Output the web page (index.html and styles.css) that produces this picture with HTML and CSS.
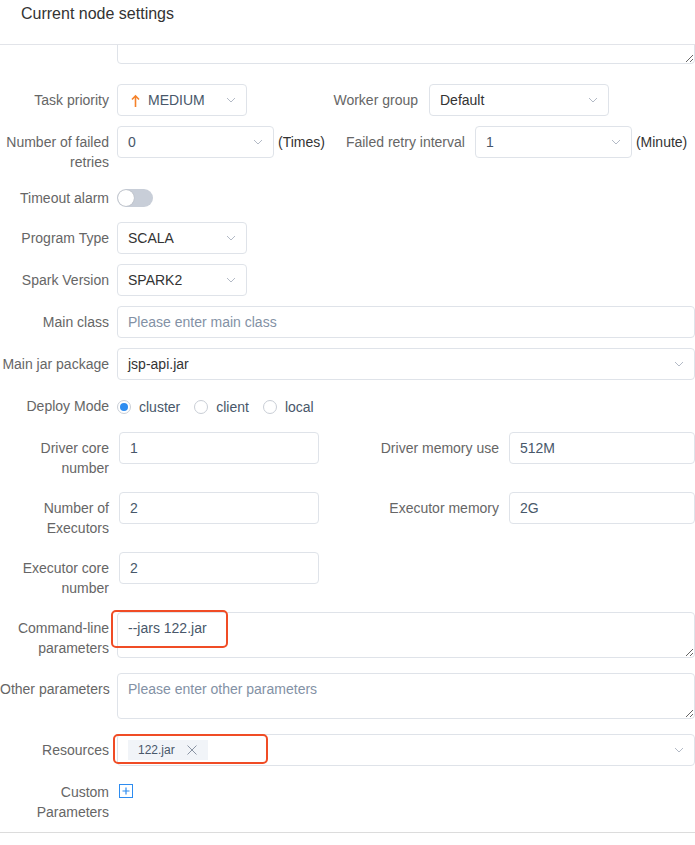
FILE: index.html
```html
<!DOCTYPE html>
<html lang="en">
<head>
    <meta charset="UTF-8">
    <meta name="viewport" content="width=device-width, initial-scale=1.0">
    <title>Current node settings</title>
    <link rel="stylesheet" href="styles.css">
</head>
<body>
    <div class="panel">
        <div class="panel-head">Current node settings</div>
        <div class="panel-body">
            <div class="form">
                <!-- description field, scrolled up under the header -->
                <div class="row row-desc">
                    <div class="label"></div>
                    <div class="field"><textarea class="textarea"></textarea></div>
                </div>

                <div class="row">
                    <div class="label">Task priority</div>
                    <div class="field">
                        <div class="select w-130">
                            <svg class="priority-icon" width="9" height="13" viewBox="0 0 9 13">
                                <path d="M4.5 13V2M1 5.5L4.5 1.8 8 5.5" fill="none" stroke="#f5822a" stroke-width="1.6"/>
                            </svg>
                            <span class="select-value muted">MEDIUM</span>
                            <svg class="arrow" width="10" height="6" viewBox="0 0 10 6"><polyline points="1,1 5,5 9,1" fill="none" stroke="#b3bac6"/></svg>
                        </div>
                        <div class="sub-label w-171">Worker group</div>
                        <div class="select w-180">
                            <span class="select-value">Default</span>
                            <svg class="arrow" width="10" height="6" viewBox="0 0 10 6"><polyline points="1,1 5,5 9,1" fill="none" stroke="#b3bac6"/></svg>
                        </div>
                    </div>
                </div>

                <div class="row">
                    <div class="label">Number of failed retries</div>
                    <div class="field">
                        <div class="select w-157">
                            <span class="select-value muted">0</span>
                            <svg class="arrow" width="10" height="6" viewBox="0 0 10 6"><polyline points="1,1 5,5 9,1" fill="none" stroke="#b3bac6"/></svg>
                        </div>
                        <span class="unit">(Times)</span>
                        <div class="sub-label w-140">Failed retry interval</div>
                        <div class="select w-157">
                            <span class="select-value muted">1</span>
                            <svg class="arrow" width="10" height="6" viewBox="0 0 10 6"><polyline points="1,1 5,5 9,1" fill="none" stroke="#b3bac6"/></svg>
                        </div>
                        <span class="unit">(Minute)</span>
                    </div>
                </div>

                <div class="row row-switch">
                    <div class="label">Timeout alarm</div>
                    <div class="field">
                        <span class="switch"><span class="switch-knob"></span></span>
                    </div>
                </div>

                <div class="row">
                    <div class="label">Program Type</div>
                    <div class="field">
                        <div class="select w-130">
                            <span class="select-value">SCALA</span>
                            <svg class="arrow" width="10" height="6" viewBox="0 0 10 6"><polyline points="1,1 5,5 9,1" fill="none" stroke="#b3bac6"/></svg>
                        </div>
                    </div>
                </div>

                <div class="row">
                    <div class="label">Spark Version</div>
                    <div class="field">
                        <div class="select w-130">
                            <span class="select-value">SPARK2</span>
                            <svg class="arrow" width="10" height="6" viewBox="0 0 10 6"><polyline points="1,1 5,5 9,1" fill="none" stroke="#b3bac6"/></svg>
                        </div>
                    </div>
                </div>

                <div class="row">
                    <div class="label">Main class</div>
                    <div class="field">
                        <input class="input" type="text" placeholder="Please enter main class">
                    </div>
                </div>

                <div class="row">
                    <div class="label">Main jar package</div>
                    <div class="field">
                        <div class="select grow">
                            <span class="select-value">jsp-api.jar</span>
                            <svg class="arrow" width="10" height="6" viewBox="0 0 10 6"><polyline points="1,1 5,5 9,1" fill="none" stroke="#b3bac6"/></svg>
                        </div>
                    </div>
                </div>

                <div class="row row-radio">
                    <div class="label">Deploy Mode</div>
                    <div class="field radios">
                        <label class="radio"><span class="radio-dot checked"></span>cluster</label>
                        <label class="radio"><span class="radio-dot"></span>client</label>
                        <label class="radio"><span class="radio-dot"></span>local</label>
                    </div>
                </div>

                <div class="row row-pair">
                    <div class="label">Driver core number</div>
                    <input class="input w-200" type="text" value="1">
                    <div class="sub-label w-180">Driver memory use</div>
                    <input class="input grow" type="text" value="512M">
                </div>

                <div class="row row-pair">
                    <div class="label">Number of Executors</div>
                    <input class="input w-200" type="text" value="2">
                    <div class="sub-label w-180">Executor memory</div>
                    <input class="input grow" type="text" value="2G">
                </div>

                <div class="row row-pair">
                    <div class="label">Executor core number</div>
                    <input class="input w-200" type="text" value="2">
                </div>

                <div class="row row-text">
                    <div class="label">Command-line parameters</div>
                    <div class="field"><textarea class="textarea">--jars 122.jar</textarea></div>
                </div>

                <div class="row row-text">
                    <div class="label nowrap">Other parameters</div>
                    <div class="field"><textarea class="textarea" placeholder="Please enter other parameters"></textarea></div>
                </div>

                <div class="row">
                    <div class="label">Resources</div>
                    <div class="field">
                        <div class="select grow">
                            <span class="select-value">
                                <span class="tag">122.jar
                                    <svg class="tag-close" width="10" height="10" viewBox="0 0 10 10"><path d="M0.5 0.5L9.5 9.5M9.5 0.5L0.5 9.5" stroke="#8a94a3"/></svg>
                                </span>
                            </span>
                            <svg class="arrow" width="10" height="6" viewBox="0 0 10 6"><polyline points="1,1 5,5 9,1" fill="none" stroke="#b3bac6"/></svg>
                        </div>
                    </div>
                </div>

                <div class="row row-last">
                    <div class="label">Custom Parameters</div>
                    <div class="field">
                        <svg class="add-icon" width="14" height="14" viewBox="0 0 14 14">
                            <rect x="0.5" y="0.5" width="13" height="13" fill="none" stroke="#2d8cf0"/>
                            <path d="M7 3.5V10.5M3.5 7H10.5" stroke="#2d8cf0" stroke-width="1.2"/>
                        </svg>
                    </div>
                </div>
            </div>
        </div>

        <!-- review marks -->
        <div class="mark mark-cmd"></div>
        <div class="mark mark-res"></div>
    </div>
</body>
</html>
```

FILE: styles.css
```css
* {
    box-sizing: border-box;
}
body {
    margin: 0;
    font-family: "Liberation Sans", Arial, sans-serif;
    font-size: 14px;
    color: #333;
    background: #fff;
}
.panel {
    position: relative;
    width: 695px;
    height: 845px;
    overflow: hidden;
}
.panel-head {
    height: 45px;
    padding-left: 21px;
    font-size: 16px;
    line-height: 27px;
    color: #333;
    border-bottom: 1px solid #e2e4e9;
}
.panel-body {
    height: 800px;
    overflow: hidden;
}
.form {
    margin-top: -27px;
    border-bottom: 1px solid #dcdcdc;
}
.row {
    display: flex;
    align-items: flex-start;
    margin-bottom: 10px;
}
.row-desc {
    margin-bottom: 20px;
}
.row-switch {
    min-height: 30px;
}
.row-radio {
    min-height: 32px;
}
.row-pair {
    min-height: 50px;
}
.row-text {
    margin-bottom: 15px;
}
.label {
    flex: none;
    width: 109px;
    margin-right: 8px;
    padding-top: 6px;
    line-height: 20px;
    text-align: right;
    color: #666;
}
.label.nowrap {
    white-space: nowrap;
}
.row-pair .label {
    margin-right: 10px;
}
.field {
    flex: 1;
    min-width: 0;
    display: flex;
    align-items: center;
}
.sub-label {
    flex: none;
    margin-right: 10px;
    line-height: 32px;
    text-align: right;
    color: #666;
}
.sub-label.w-171 {
    width: 171px;
    margin-right: 11px;
}
.unit {
    flex: none;
    margin-left: 4px;
    color: #333;
}
.w-130 { width: 130px; }
.w-140 { width: 140px; }
.w-157 { width: 157px; }
.w-180 { width: 180px; }
.w-200 { width: 200px; }
.grow { flex: 1; min-width: 0; }

.select {
    flex: none;
    display: flex;
    align-items: center;
    height: 32px;
    padding: 0 10px;
    border: 1px solid #dfe3e9;
    border-radius: 4px;
    background: #fff;
}
.select.grow {
    flex: 1;
}
.select-value {
    flex: 1;
    display: flex;
    align-items: center;
    white-space: nowrap;
    color: #333;
}
.select-value.muted {
    color: #48576a;
}
.arrow {
    flex: none;
}
.priority-icon {
    flex: none;
    margin: 0 8px 0 3px;
}

.input {
    display: block;
    width: 100%;
    height: 32px;
    padding: 0 10px;
    border: 1px solid #dfe3e9;
    border-radius: 4px;
    font-family: inherit;
    font-size: 14px;
    color: #48576a;
    outline: none;
}
.input.w-200 {
    width: 200px;
    flex: none;
}
.input::placeholder,
.textarea::placeholder {
    color: #8391a5;
}
.textarea {
    display: block;
    width: 100%;
    height: 46px;
    padding: 5px 10px;
    border: 1px solid #dfe3e9;
    border-radius: 4px;
    font-family: inherit;
    font-size: 14px;
    line-height: 20px;
    color: #48576a;
    outline: none;
}

.switch {
    position: relative;
    display: block;
    width: 36px;
    height: 18px;
    margin-top: 7px;
    border-radius: 9px;
    background: #c8ced8;
}
.switch-knob {
    position: absolute;
    top: 1px;
    left: 1px;
    width: 16px;
    height: 16px;
    border-radius: 50%;
    background: #fff;
    box-shadow: 0 0 1px rgba(0, 0, 0, 0.3);
}
.row-switch .field {
    align-items: flex-start;
}

.radios {
    padding-top: 7px;
    line-height: 20px;
}
.radio {
    display: flex;
    align-items: center;
    margin-right: 14px;
    color: #48576a;
}
.radio-dot {
    position: relative;
    width: 14px;
    height: 14px;
    margin-right: 8px;
    border: 1px solid #c9ced6;
    border-radius: 50%;
    background: #fff;
}
.radio-dot.checked::after {
    content: "";
    position: absolute;
    top: 2px;
    left: 2px;
    width: 8px;
    height: 8px;
    border-radius: 50%;
    background: #2d8cf0;
}

.tag {
    display: inline-flex;
    align-items: center;
    height: 20px;
    padding: 0 11px 0 10px;
    font-size: 12px;
    color: #48576a;
    background: #f1f4f8;
}
.tag-close {
    margin-left: 12px;
}
.row-last .field {
    align-items: flex-start;
}
.add-icon {
    display: block;
    margin: 8px 0 0 2px;
}

.mark {
    position: absolute;
    border: 2px solid #f04c25;
    border-radius: 5px;
}
.mark-cmd {
    left: 111px;
    top: 610px;
    width: 117px;
    height: 38px;
}
.mark-res {
    left: 113px;
    top: 734px;
    width: 155px;
    height: 30px;
}
```
